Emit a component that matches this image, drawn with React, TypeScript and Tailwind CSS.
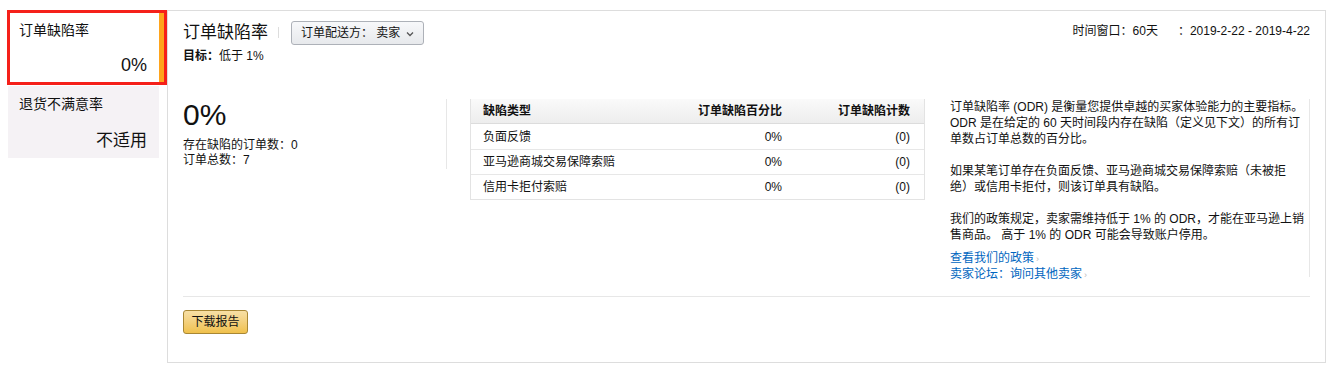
import React from 'react';

const font = { fontFamily: '"Liberation Sans", "Noto Sans CJK SC", sans-serif' };

const rows = [
  { type: '负面反馈', pct: '0%', count: '(0)' },
  { type: '亚马逊商城交易保障索赔', pct: '0%', count: '(0)' },
  { type: '信用卡拒付索赔', pct: '0%', count: '(0)' },
];

const Sidebar: React.FC = () => (
  <div className="w-[160px] flex flex-col">
    <div className="h-[75px] border-[3px] border-[#f5201a] flex">
      <div className="flex-1 flex flex-col pl-[9px] pr-[12px] pt-[8px]">
        <div className="text-[14px] leading-[18px]">订单缺陷率</div>
        <div className="mt-auto mb-[6px] text-right text-[18px] leading-[22px]">0%</div>
      </div>
      <div className="w-[5px] bg-[#ffa41c]" />
    </div>
    <div className="ml-[1px] mt-[1px] w-[151px] h-[72px] bg-[#f5f2f5] flex flex-col pl-[11px] pr-[12px] pt-[9px]">
      <div className="text-[14px] leading-[18px]">退货不满意率</div>
      <div className="mt-auto mb-[6px] text-right text-[17px] leading-[22px]">不适用</div>
    </div>
  </div>
);

const DefectTable: React.FC = () => (
  <div className="w-[455px] border-x border-b border-[#e3e3e3] text-[12px]">
    <div className="grid grid-cols-[1fr_150px_130px] h-[25px] items-center font-bold bg-gradient-to-b from-[#fafafa] to-[#ededed] border-b border-[#dcdcdc]">
      <div className="pl-[12px]">缺陷类型</div>
      <div className="text-right pr-[12px]">订单缺陷百分比</div>
      <div className="text-right pr-[14px]">订单缺陷计数</div>
    </div>
    {rows.map((r, i) => (
      <div
        key={r.type}
        className={`grid grid-cols-[1fr_150px_130px] h-[25px] items-center ${i > 0 ? 'border-t border-[#e7e7e7]' : ''}`}
      >
        <div className="pl-[12px]">{r.type}</div>
        <div className="text-right pr-[12px]">{r.pct}</div>
        <div className="text-right pr-[14px]">{r.count}</div>
      </div>
    ))}
  </div>
);

export default function App() {
  return (
    <div className="w-[1334px] h-[369px] bg-white text-[#111] flex pt-[10px] pl-[7px]" style={font}>
      <Sidebar />

      <div className="w-[1159px] h-[353px] border border-[#dddddd] px-[15px] pt-[9px] flex flex-col">
        {/* header */}
        <div className="flex justify-between items-start">
          <div className="flex items-center">
            <div className="text-[17px] leading-[24px]">订单缺陷率</div>
            <div className="w-px h-[11px] bg-[#dddddd] ml-[10px] mr-[12px]" />
            <button className="h-[24px] mt-[1px] px-[9px] flex items-center gap-[6px] text-[12px] border border-[#adb1b8] rounded-[3px] bg-gradient-to-b from-[#f7f8fa] to-[#e7e9ec]">
              <span>订单配送方： 卖家</span>
              <svg width="8" height="6" viewBox="0 0 8 6" className="mt-[1px]">
                <path d="M1 1.5 L4 4.5 L7 1.5" stroke="#555" strokeWidth="1.3" fill="none" />
              </svg>
            </button>
          </div>
          <div className="flex items-center text-[12px] leading-[16px] pt-[3px]">
            <span>时间窗口：60天</span>
            <span className="ml-[20px]">：2019-2-22 - 2019-4-22</span>
          </div>
        </div>
        <div className="mt-[4px] text-[12px] leading-[14px]">
          <span className="font-bold">目标：</span>低于 1%
        </div>

        {/* middle */}
        <div className="mt-[36px] flex items-start">
          <div className="w-[264px] h-[70px] border-r border-[#e7e7e7]">
            <div className="text-[30px] leading-[32px]">0%</div>
            <div className="mt-[7px] text-[12px] leading-[15px]">
              <div>存在缺陷的订单数：0</div>
              <div>订单总数：7</div>
            </div>
          </div>

          <div className="ml-[23px]">
            <DefectTable />
          </div>

          <div className="ml-[25px] w-[360px] h-[178px] border-r border-[#e7e7e7] text-[12px] leading-[16px] pr-[2px]">
            <p>
              订单缺陷率 (ODR) 是衡量您提供卓越的买家体验能力的主要指标。
              <br />
              ODR 是在给定的 60 天时间段内存在缺陷（定义见下文）的所有订
              <br />
              单数占订单总数的百分比。
            </p>
            <p className="mt-[16px]">
              如果某笔订单存在负面反馈、亚马逊商城交易保障索赔（未被拒
              <br />
              绝）或信用卡拒付，则该订单具有缺陷。
            </p>
            <p className="mt-[16px]">
              我们的政策规定，卖家需维持低于 1% 的 ODR，才能在亚马逊上销
              <br />
              售商品。 高于 1% 的 ODR 可能会导致账户停用。
            </p>
            <div className="mt-[8px] leading-[15px] text-[#0066c0]">
              <div>
                查看我们的政策<span className="ml-[2px] text-[9px] text-[#bbbbbb]">›</span>
              </div>
              <div>
                卖家论坛：询问其他卖家<span className="ml-[2px] text-[9px] text-[#bbbbbb]">›</span>
              </div>
            </div>
          </div>
        </div>

        <div className="mt-[19px] border-t border-[#e7e7e7]" />

        <div className="mt-[12px]">
          <button className="h-[24px] w-[65px] text-[12px] border border-[#a88734] rounded-[3px] bg-gradient-to-b from-[#f7dfa5] to-[#f0c14b]">
            下载报告
          </button>
        </div>
      </div>
    </div>
  );
}
